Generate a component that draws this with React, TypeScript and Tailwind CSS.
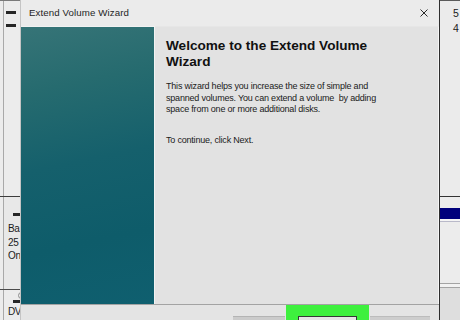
export default function App() {
  return (
    <div className="w-[460px] h-[320px] flex overflow-hidden bg-[#ebebeb] font-['Liberation_Sans',Arial,sans-serif] text-black">
      {/* Disk Management window behind, left edge */}
      <div className="w-[20px] h-full flex flex-col shrink-0 overflow-hidden bg-[#ececec]">
        <div className="h-px bg-[#7a7a7a]" />
        <div className="h-[195px] ml-[3px] border-l border-[#a9a9a9] pt-[10px] flex flex-col gap-[10px]">
          <div className="ml-[2px] w-[10px] h-[3px] bg-[#262626]" />
          <div className="ml-[2px] w-[10px] h-[3px] bg-[#262626]" />
        </div>
        <div className="h-px bg-[#3c3c3c]" />
        <div className="h-[92px] ml-[3px] border-l border-[#a9a9a9] pt-[16px] pl-[4px] bg-[#e8e8e8]">
          <div className="ml-[5px] w-[10px] h-[3px] bg-[#262626]" />
          <div className="mt-[6px] text-[10px] leading-[13.5px] tracking-[-0.4px] text-[#1a1a1a] whitespace-nowrap">
            <div>Ba</div>
            <div>25</div>
            <div>On</div>
          </div>
        </div>
        <div className="h-px bg-[#4a4a4a]" />
        <div className="flex-1 ml-[3px] border-l border-[#a9a9a9] pt-[2px] pl-[4px]">
          <div className="ml-[10px] w-[7px] h-[7px] rounded-full border border-[#8a8a8a]" />
          <div className="ml-[5px] mt-[1px] w-[10px] h-[3px] bg-[#262626]" />
          <div className="mt-[3px] text-[10px] leading-[12px] tracking-[-0.4px] text-[#1a1a1a] whitespace-nowrap">DV</div>
        </div>
      </div>

      {/* Wizard dialog */}
      <div className="w-[420px] h-full shrink-0 flex flex-col bg-[#e2e2e2] border-l border-[#c4c4c4] border-r border-r-[#2e2e2e]">
        <div className="h-[26px] flex items-center justify-between pl-[8px] pr-[11px] bg-[#ebebeb]">
          <span className="text-[9.7px] text-[#1e1e1e] tracking-[0.1px]">Extend Volume Wizard</span>
          <svg width="8" height="8" viewBox="0 0 8 8" className="block">
            <path d="M0.5 0.5 L7.5 7.5 M7.5 0.5 L0.5 7.5" stroke="#2a2a2a" strokeWidth="1" fill="none" />
          </svg>
        </div>
        <div className="flex-1 flex">
          <div className="w-[134px] h-full border-t border-r border-[#f2f2f2] bg-[linear-gradient(168deg,#367477_0%,#266b6f_22%,#15606c_48%,#0e5c6a_75%,#0f5f6f_100%)]" />
          <div className="flex-1 pl-[11px] pt-[11px] pr-[8px] border-t border-[#e6e6e6] border-r border-r-[#f6f6f6]">
            <h1 className="text-[13.6px] leading-[16px] font-bold text-[#111]">
              Welcome to the Extend Volume
              <br />
              Wizard
            </h1>
            <div className="mt-[11px] text-[9px] leading-[11.5px] tracking-[-0.2px] text-[#1a1a1a]">
              <p>
                This wizard helps you increase the size of simple and
                <br />
                spanned volumes. You can extend a volume&nbsp; by adding
                <br />
                space from one or more additional disks.
              </p>
              <p className="mt-[19.5px]">To continue, click Next.</p>
            </div>
          </div>
        </div>
        <div className="h-[16px] border-t border-[#a3a3a3] bg-[#e4e4e4] flex items-end pl-[212px]">
          <div className="w-[52px] h-[4px] bg-[#cbcbcb] border-t border-[#b4b4b4]" />
          <div className="ml-px w-[83px] h-full bg-[#3ef03e] flex items-end justify-center">
            <div className="w-[59px] h-[4px] border border-b-0 border-[#373737] bg-[#e6e6e6]" />
          </div>
          <div className="ml-px w-[60px] h-[4px] bg-[#cdcdcd] border-t border-[#bcbcbc]" />
        </div>
      </div>

      {/* Disk Management window behind, right edge */}
      <div className="flex-1 h-full flex flex-col overflow-hidden bg-[#ebebeb]">
        <div className="h-px bg-[#5a5a5a]" />
        <div className="h-[195px] pl-[13px] pt-[5px] text-[10.5px] leading-[15px] text-[#1a1a1a] whitespace-nowrap">
          <div>5</div>
          <div>4</div>
        </div>
        <div className="h-px bg-[#333]" />
        <div className="h-[11px] bg-[#ececec]" />
        <div className="h-[11px] bg-[#00007c]" />
        <div className="h-[2px] bg-[#f4f4f4]" />
        <div className="h-px bg-[#b9b9c9]" />
        <div className="h-[61px] bg-[#ececec]" />
        <div className="h-px bg-[#a4a4a4]" />
        <div className="h-[3px] bg-[#f2f2f2]" />
        <div className="h-px bg-[#a4a4a4]" />
        <div className="flex-1 bg-[#dedede]" />
      </div>
    </div>
  )
}
